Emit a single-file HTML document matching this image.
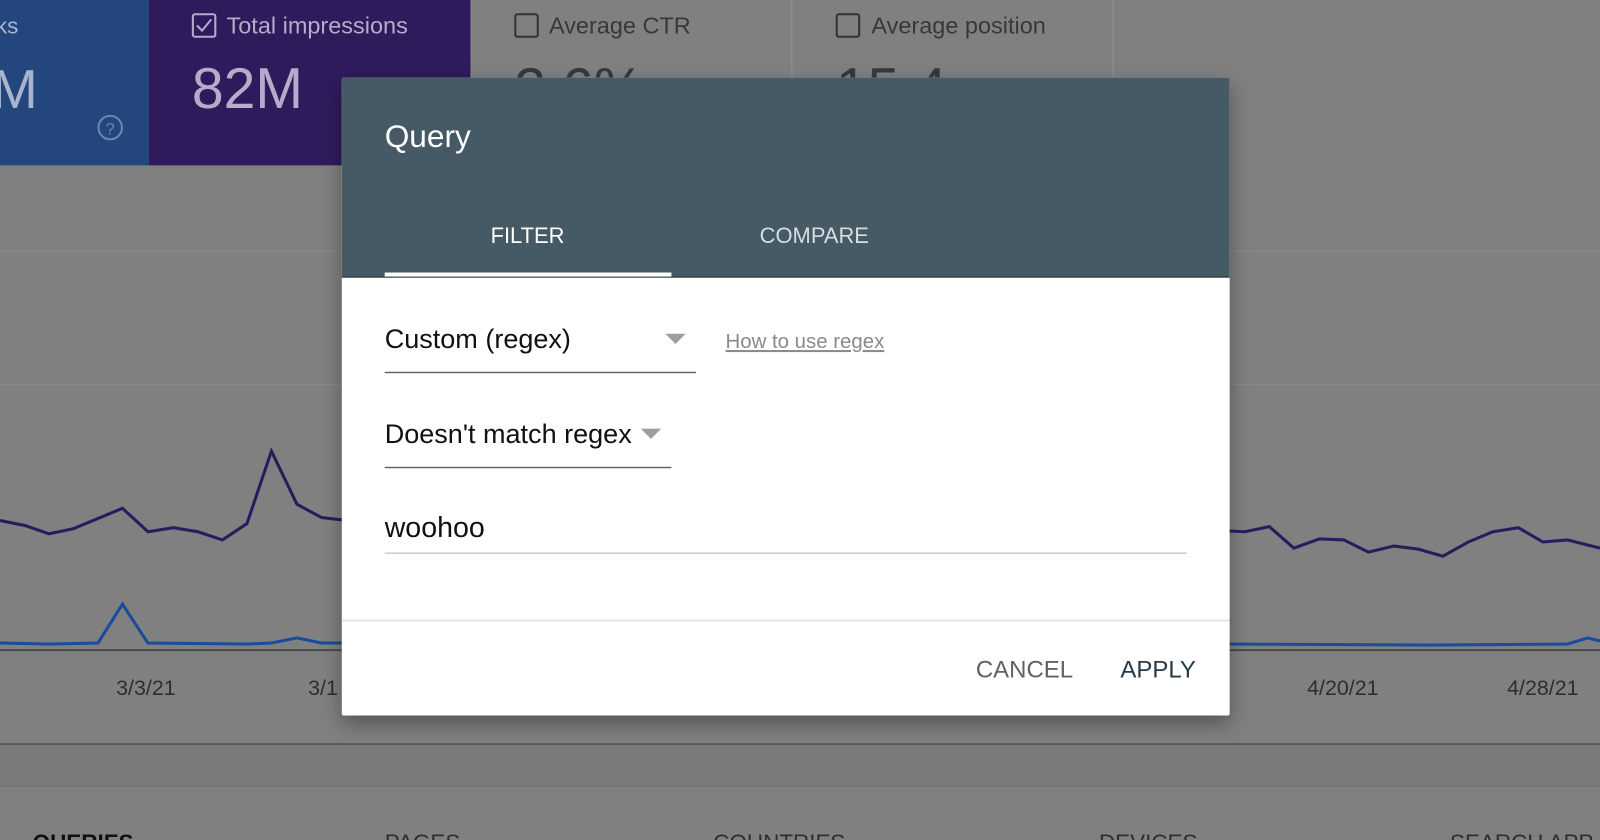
<!DOCTYPE html>
<html><head><meta charset="utf-8"><style>
html,body{margin:0;padding:0;background:#808080;overflow:hidden}
svg{display:block}
text{font-family:"Liberation Sans",sans-serif}
</style></head><body>
<svg width="1600" height="840" viewBox="0 0 1568 823" preserveAspectRatio="none" xmlns="http://www.w3.org/2000/svg">
<defs><filter id="sh" x="-10%" y="-10%" width="120%" height="130%"><feDropShadow dx="0" dy="8" stdDeviation="10" flood-color="#000" flood-opacity="0.35"/></filter></defs>
<rect width="1568" height="823" fill="#808080"/>
<rect x="0" y="0" width="146" height="162" fill="#24467f"/>
<rect x="146" y="0" width="315" height="162" fill="#2f1a5c"/>
<line x1="776" y1="0" x2="776" y2="162" stroke="#8c8c8c" stroke-width="1.5"/>
<line x1="1091" y1="0" x2="1091" y2="162" stroke="#8c8c8c" stroke-width="1.5"/>
<text x="-4" y="33" font-size="22" fill="#a9b5cc">ks</text>
<text x="-8" y="106" font-size="54" fill="#a9b5cc">M</text>
<circle cx="108" cy="125" r="11.5" fill="none" stroke="#6f85ad" stroke-width="2"/>
<text x="108" y="132" font-size="16" fill="#6f85ad" text-anchor="middle">?</text>
<rect x="189" y="14" width="22" height="22" rx="2" fill="none" stroke="#b5accb" stroke-width="2"/>
<path d="M193 25 l5 5 l9 -11" fill="none" stroke="#b5accb" stroke-width="2"/>
<text x="222" y="33" font-size="23" fill="#b5accb">Total impressions</text>
<text x="188" y="106" font-size="56" fill="#b5accb">82M</text>
<rect x="505" y="14" width="22" height="22" rx="2" fill="none" stroke="#333" stroke-width="2"/>
<text x="538" y="33" font-size="23" fill="#383838">Average CTR</text>
<text x="504" y="106" font-size="56" fill="#383838">2.6%</text>
<rect x="820" y="14" width="22" height="22" rx="2" fill="none" stroke="#333" stroke-width="2"/>
<text x="854" y="33" font-size="23" fill="#383838">Average position</text>
<text x="819" y="106" font-size="56" fill="#383838">15.4</text>
<line x1="0" y1="246" x2="1568" y2="246" stroke="#8a8a8a"/>
<line x1="0" y1="377" x2="1568" y2="377" stroke="#8a8a8a"/>
<polyline fill="none" stroke="#2b1a5e" stroke-width="3" points="0,510 25,515 48,523 72,518 120,498 145,521 170,517 194,521 218,529 242,513 266,442 291,494 315,507 340,510"/>
<polyline fill="none" stroke="#2b1a5e" stroke-width="3" points="1200,520 1220,521 1244,516 1268,537 1293,528 1317,529 1341,541 1366,535 1390,538 1414,545 1439,531 1463,521 1488,517 1512,531 1536,529 1568,537"/>
<polyline fill="none" stroke="#1a4c9c" stroke-width="3" points="0,630 48,631 96,630 120,592 145,630 242,631 266,630 291,625 315,630 340,630"/>
<polyline fill="none" stroke="#1a4c9c" stroke-width="3" points="1200,631 1400,632 1536,631 1556,625 1568,628"/>
<line x1="0" y1="637" x2="1568" y2="637" stroke="#3a3a3a" stroke-width="1.5"/>
<text x="143" y="681" font-size="21" fill="#2e2e2e" text-anchor="middle">3/3/21</text>
<text x="302" y="681" font-size="21" fill="#2e2e2e">3/1</text>
<text x="1316" y="681" font-size="21" fill="#2e2e2e" text-anchor="middle">4/20/21</text>
<text x="1512" y="681" font-size="21" fill="#2e2e2e" text-anchor="middle">4/28/21</text>
<rect x="0" y="729" width="1568" height="41" fill="#7b7b7b"/>
<line x1="0" y1="729" x2="1568" y2="729" stroke="#5e5e5e" stroke-width="2"/>
<line x1="0" y1="770" x2="1568" y2="770" stroke="#727272" stroke-width="1.5"/>
<text x="32" y="833" font-size="22" font-weight="bold" fill="#111">QUERIES</text>
<text x="377" y="833" font-size="22" fill="#2e2e2e">PAGES</text>
<text x="699" y="833" font-size="22" fill="#2e2e2e">COUNTRIES</text>
<text x="1077" y="833" font-size="22" fill="#2e2e2e">DEVICES</text>
<text x="1421" y="833" font-size="22" fill="#2e2e2e">SEARCH APP</text>
<g filter="url(#sh)"><rect x="335" y="76" width="870" height="625" rx="2" fill="#fff"/></g>
<path d="M335 78 a2 2 0 0 1 2 -2 h866 a2 2 0 0 1 2 2 v194 h-870z" fill="#455a64"/>
<line x1="335" y1="271.5" x2="1205" y2="271.5" stroke="#263238" stroke-width="1"/>
<text x="377" y="144" font-size="31" fill="#fff">Query</text>
<text x="517" y="238" font-size="21.5" fill="#fff" text-anchor="middle">FILTER</text>
<text x="798" y="238" font-size="21.5" fill="#d5dde1" text-anchor="middle">COMPARE</text>
<rect x="377" y="267" width="281" height="4" fill="#fff"/>
<text x="377" y="341" font-size="26.5" fill="#111">Custom (regex)</text>
<path d="M652 327 h20 l-10 10z" fill="#9e9e9e"/>
<line x1="377" y1="365" x2="682" y2="365" stroke="#666" stroke-width="1.5"/>
<text x="711" y="341" font-size="20" fill="#8a8a8a" text-decoration="underline">How to use regex</text>
<text x="377" y="434" font-size="26.5" fill="#111">Doesn't match regex</text>
<path d="M628 420 h20 l-10 10z" fill="#9e9e9e"/>
<line x1="377" y1="458" x2="658" y2="458" stroke="#666" stroke-width="1.5"/>
<text x="377" y="526" font-size="28" fill="#111">woohoo</text>
<line x1="377" y1="542" x2="1163" y2="542" stroke="#cfcfcf" stroke-width="1.5"/>
<line x1="335" y1="608" x2="1205" y2="608" stroke="#e0e0e0" stroke-width="1.5"/>
<text x="1004" y="664" font-size="23.5" fill="#5f6368" text-anchor="middle">CANCEL</text>
<text x="1135" y="664" font-size="23.5" fill="#263a4a" text-anchor="middle">APPLY</text>
</svg>
</body></html>
